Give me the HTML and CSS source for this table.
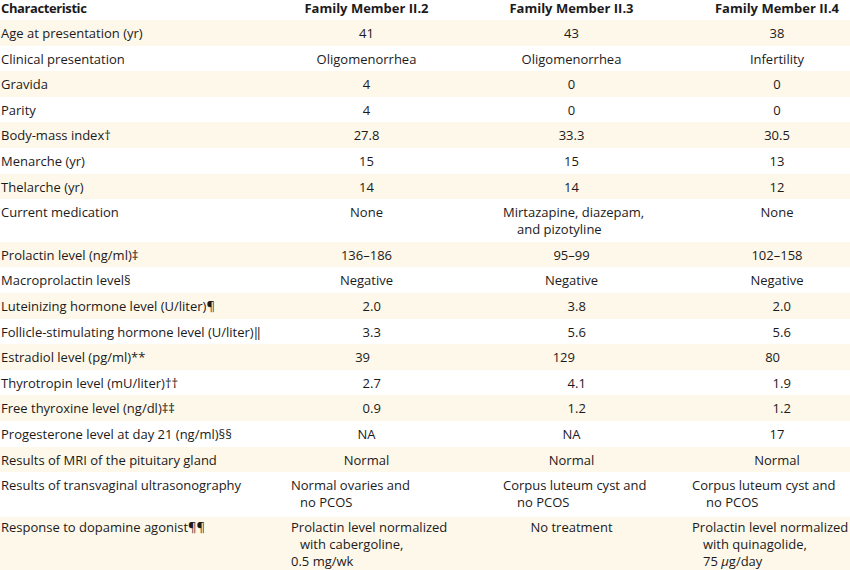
FILE: index.html
```html
<!DOCTYPE html>
<html>
<head>
<meta charset="utf-8">
<link rel="stylesheet" href="styles.css">
</head>
<body>
<div class="table">
  <div class="row head">
    <div class="c1 hd1">Characteristic</div>
    <div class="c2 ctr">Family Member II.2</div>
    <div class="c3 ctr">Family Member II.3</div>
    <div class="c4 ctr">Family Member II.4</div>
  </div>
  <div class="row alt">
    <div class="c1">Age at presentation (yr)</div>
    <div class="c2 ctr">41</div>
    <div class="c3 ctr">43</div>
    <div class="c4 ctr">38</div>
  </div>
  <div class="row">
    <div class="c1">Clinical presentation</div>
    <div class="c2 ctr">Oligomenorrhea</div>
    <div class="c3 ctr">Oligomenorrhea</div>
    <div class="c4 ctr">Infertility</div>
  </div>
  <div class="row alt">
    <div class="c1">Gravida</div>
    <div class="c2 ctr">4</div>
    <div class="c3 ctr">0</div>
    <div class="c4 ctr">0</div>
  </div>
  <div class="row">
    <div class="c1">Parity</div>
    <div class="c2 ctr">4</div>
    <div class="c3 ctr">0</div>
    <div class="c4 ctr">0</div>
  </div>
  <div class="row alt">
    <div class="c1">Body-mass index†</div>
    <div class="c2 ctr">27.8</div>
    <div class="c3 ctr">33.3</div>
    <div class="c4 ctr">30.5</div>
  </div>
  <div class="row">
    <div class="c1">Menarche (yr)</div>
    <div class="c2 ctr">15</div>
    <div class="c3 ctr">15</div>
    <div class="c4 ctr">13</div>
  </div>
  <div class="row alt">
    <div class="c1">Thelarche (yr)</div>
    <div class="c2 ctr">14</div>
    <div class="c3 ctr">14</div>
    <div class="c4 ctr">12</div>
  </div>
  <div class="row">
    <div class="c1">Current medication</div>
    <div class="c2 ctr">None</div>
    <div class="c3 lft"><span class="ln">Mirtazapine, diazepam,</span><span class="ln ind14">and pizotyline</span></div>
    <div class="c4 ctr">None</div>
  </div>
  <div class="row alt">
    <div class="c1">Prolactin level (ng/ml)‡</div>
    <div class="c2 ctr">136–186</div>
    <div class="c3 ctr">95–99</div>
    <div class="c4 ctr">102–158</div>
  </div>
  <div class="row">
    <div class="c1">Macroprolactin level§</div>
    <div class="c2 ctr">Negative</div>
    <div class="c3 ctr">Negative</div>
    <div class="c4 ctr">Negative</div>
  </div>
  <div class="row alt">
    <div class="c1">Luteinizing hormone level (U/liter)¶</div>
    <div class="c2 dec"><span class="ip">2</span><span class="fp">.0</span></div>
    <div class="c3 dec"><span class="ip">3</span><span class="fp">.8</span></div>
    <div class="c4 dec"><span class="ip">2</span><span class="fp">.0</span></div>
  </div>
  <div class="row">
    <div class="c1">Follicle-stimulating hormone level (U/liter)‖</div>
    <div class="c2 dec"><span class="ip">3</span><span class="fp">.3</span></div>
    <div class="c3 dec"><span class="ip">5</span><span class="fp">.6</span></div>
    <div class="c4 dec"><span class="ip">5</span><span class="fp">.6</span></div>
  </div>
  <div class="row alt">
    <div class="c1">Estradiol level (pg/ml)**</div>
    <div class="c2 dec"><span class="ip">39</span><span class="fp"></span></div>
    <div class="c3 dec"><span class="ip">129</span><span class="fp"></span></div>
    <div class="c4 dec"><span class="ip">80</span><span class="fp"></span></div>
  </div>
  <div class="row">
    <div class="c1">Thyrotropin level (mU/liter)††</div>
    <div class="c2 dec"><span class="ip">2</span><span class="fp">.7</span></div>
    <div class="c3 dec"><span class="ip">4</span><span class="fp">.1</span></div>
    <div class="c4 dec"><span class="ip">1</span><span class="fp">.9</span></div>
  </div>
  <div class="row alt">
    <div class="c1">Free thyroxine level (ng/dl)‡‡</div>
    <div class="c2 dec"><span class="ip">0</span><span class="fp">.9</span></div>
    <div class="c3 dec"><span class="ip">1</span><span class="fp">.2</span></div>
    <div class="c4 dec"><span class="ip">1</span><span class="fp">.2</span></div>
  </div>
  <div class="row">
    <div class="c1">Progesterone level at day 21 (ng/ml)§§</div>
    <div class="c2 ctr">NA</div>
    <div class="c3 ctr">NA</div>
    <div class="c4 ctr">17</div>
  </div>
  <div class="row alt">
    <div class="c1">Results of MRI of the pituitary gland</div>
    <div class="c2 ctr">Normal</div>
    <div class="c3 ctr">Normal</div>
    <div class="c4 ctr">Normal</div>
  </div>
  <div class="row tall">
    <div class="c1">Results of transvaginal ultrasonography</div>
    <div class="c2 lft"><span class="ln">Normal ovaries and</span><span class="ln ind9">no PCOS</span></div>
    <div class="c3 lft"><span class="ln">Corpus luteum cyst and</span><span class="ln ind14">no PCOS</span></div>
    <div class="c4 lft"><span class="ln">Corpus luteum cyst and</span><span class="ln ind14">no PCOS</span></div>
  </div>
  <div class="row alt last">
    <div class="c1">Response to dopamine agonist¶¶</div>
    <div class="c2 lft"><span class="ln">Prolactin level normalized</span><span class="ln ind9">with cabergoline,</span><span class="ln">0.5 mg/wk</span></div>
    <div class="c3 ctr">No treatment</div>
    <div class="c4 lft"><span class="ln">Prolactin level normalized</span><span class="ln ind11">with quinagolide,</span><span class="ln ind11">75 <i>μ</i>g/day</span></div>
  </div>
</div>
</body>
</html>
```

FILE: styles.css
```css
html, body {
  margin: 0;
  padding: 0;
  background: #ffffff;
  overflow: hidden;
}

body {
  font-family: "Open Sans", "Noto Sans", sans-serif;
  font-size: 13px;
  line-height: 17px;
  color: #1c1a1b;
}

.table {
  width: 850px;
  display: flex;
  flex-direction: column;
}

.row {
  display: grid;
  grid-template-columns: 264px 205px 205px 176px;
  padding: 5px 0 3.6px;
}

.row.alt {
  background: #fdf8ea;
}

.row.head {
  padding: 0 0 3px;
  font-weight: 700;
}

.hd1 {
  letter-spacing: -0.4px;
}

.row.tall {
  padding-bottom: 5.6px;
}

.row.last {
  padding-top: 2px;
  padding-bottom: 20px;
}

.c1 {
  padding-left: 1px;
  white-space: nowrap;
}

.c4 {
  padding-left: 30px;
}

.ctr {
  text-align: center;
  white-space: nowrap;
}

.dec {
  display: grid;
  grid-template-columns: 1fr 1fr;
}

.c2.dec, .c3.dec {
  padding-left: 7px;
}

.c4.dec {
  padding-left: 36px;
}

.ip {
  text-align: right;
}

.fp {
  text-align: left;
}

.lft {
  display: flex;
  flex-direction: column;
  white-space: nowrap;
}

.c2.lft { padding-left: 27px; }
.c3.lft { padding-left: 34px; }
.c4.lft { padding-left: 18px; }

.ind9 { padding-left: 9px; }
.ind11 { padding-left: 11px; }
.ind14 { padding-left: 14px; }
```
